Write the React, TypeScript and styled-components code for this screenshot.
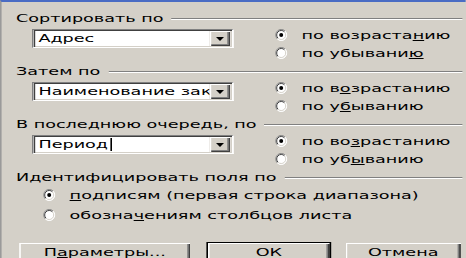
import React, { FC, ReactNode } from 'react';
import styled, { createGlobalStyle } from 'styled-components';

// The reference is the classic sort dialog, stretched horizontally.
// Everything is laid out at native width and scaled on X by STRETCH.
const STRETCH = 1.6;

const GlobalStyle = createGlobalStyle`
  html, body {
    margin: 0;
    padding: 0;
    background: #d4d0c8;
    overflow: hidden;
  }
`;

const Viewport = styled.div`
  width: 466px;
  height: 258px;
  overflow: hidden;
  background: #d4d0c8;
`;

const Dialog = styled.div`
  width: ${466 / STRETCH}px;
  height: 258px;
  box-sizing: border-box;
  transform: scaleX(${STRETCH});
  transform-origin: 0 0;
  display: flex;
  flex-direction: column;
  padding: 10px 2px 0 9px;
  border-top: 2px solid #4a6cc4;
  border-left: 1px solid #9a9a9a;
  font-family: 'DejaVu Sans', 'Liberation Sans', sans-serif;
  font-size: 11px;
  color: #000;
`;

const Group = styled.section`
  display: flex;
  flex-direction: column;
  margin-bottom: 3px;
`;

const Legend = styled.div`
  display: flex;
  align-items: center;
  gap: 5px;
  height: 13px;
  line-height: 13px;
  white-space: nowrap;

  &::after {
    content: '';
    flex: 1;
    border-top: 1px solid #808080;
    border-bottom: 1px solid #fff;
  }
`;

const SortRow = styled.div`
  display: flex;
  align-items: flex-start;
  padding: 1px 0 0 10px;
`;

const Combo = styled.div`
  flex: 0 0 auto;
  display: flex;
  align-items: stretch;
  width: 126px;
  height: 19px;
  margin-top: 3px;
  box-sizing: border-box;
  background: #fff;
  border-style: solid;
  border-width: 1px;
  border-color: #808080 #fff #fff #808080;
  box-shadow: inset 1px 1px 0 #404040, inset -1px -1px 0 #d4d0c8;
  padding: 1px;
`;

const ComboText = styled.div`
  flex: 1;
  display: flex;
  align-items: center;
  overflow: hidden;
  white-space: nowrap;
  padding-left: 2px;
`;

const Caret = styled.span`
  display: inline-block;
  width: 1px;
  height: 13px;
  margin-left: 1px;
  background: #000;
`;

const ComboButton = styled.div`
  flex: 0 0 13px;
  display: flex;
  align-items: center;
  justify-content: center;
  background: #d4d0c8;
  box-shadow: inset 1px 1px 0 #fff, inset -1px -1px 0 #404040, inset -2px -2px 0 #808080;
`;

const RadioColumn = styled.div<{ $indent: number; $row: number; $top?: number }>`
  display: flex;
  flex-direction: column;
  margin-left: ${(p) => p.$indent}px;
  padding-top: ${(p) => p.$top ?? 0}px;

  & > * {
    height: ${(p) => p.$row}px;
  }
`;

const RadioRow = styled.label`
  display: flex;
  align-items: center;
  gap: 9px;
  white-space: nowrap;
`;

const RadioMark = styled.svg`
  flex: 0 0 auto;
  width: ${12 / STRETCH}px;
  height: 12px;
`;

const Buttons = styled.div`
  display: flex;
  gap: 8px;
  margin: 14px 0 0 1px;
`;

const Button = styled.div<{ $width: number; $default?: boolean }>`
  flex: 0 0 auto;
  display: flex;
  align-items: center;
  justify-content: center;
  width: ${(p) => p.$width}px;
  height: 21px;
  box-sizing: border-box;
  background: #d4d0c8;
  border: 1px solid ${(p) => (p.$default ? '#000' : 'transparent')};
  box-shadow: inset 1px 1px 0 #fff, inset -1px -1px 0 #404040, inset -2px -2px 0 #808080;
  white-space: nowrap;
  line-height: 13px;

  &:first-child {
    margin-right: 1px;
  }
`;

const Arrow: FC = () => (
  <svg width={8 / STRETCH} height={4} viewBox="0 0 8 4" preserveAspectRatio="none">
    <polygon points="0,0 8,0 4,4" fill="#000" />
  </svg>
);

const Radio: FC<{ checked?: boolean; children: ReactNode }> = ({ checked, children }) => (
  <RadioRow>
    <RadioMark viewBox="0 0 12 12" preserveAspectRatio="none">
      <circle cx="6" cy="6" r="5.5" fill="#fff" />
      <path d="M2.1 9.9 A5.5 5.5 0 0 1 9.9 2.1" stroke="#808080" fill="none" />
      <path d="M9.9 2.1 A5.5 5.5 0 0 1 2.1 9.9" stroke="#fff" fill="none" />
      <path d="M2.8 9.2 A4.5 4.5 0 0 1 9.2 2.8" stroke="#404040" fill="none" />
      <path d="M9.2 2.8 A4.5 4.5 0 0 1 2.8 9.2" stroke="#d4d0c8" fill="none" />
      {checked && <circle cx="6" cy="6" r="2" fill="#000" />}
    </RadioMark>
    <span>{children}</span>
  </RadioRow>
);

type SortGroupProps = {
  title: string;
  value: ReactNode;
  asc: ReactNode;
  desc: ReactNode;
};

const SortGroup: FC<SortGroupProps> = ({ title, value, asc, desc }) => (
  <Group>
    <Legend>{title}</Legend>
    <SortRow>
      <Combo>
        <ComboText>{value}</ComboText>
        <ComboButton>
          <Arrow />
        </ComboButton>
      </Combo>
      <RadioColumn $indent={26} $row={18}>
        <Radio checked>{asc}</Radio>
        <Radio>{desc}</Radio>
      </RadioColumn>
    </SortRow>
  </Group>
);

export default function App() {
  return (
    <Viewport>
      <GlobalStyle />
      <Dialog>
        <SortGroup
          title="Сортировать по"
          value="Адрес"
          asc={<>по возраста<u>н</u>ию</>}
          desc={<>по убывани<u>ю</u></>}
        />
        <SortGroup
          title="Затем по"
          value="Наименование заказа"
          asc={<>по в<u>о</u>зрастанию</>}
          desc={<>по у<u>б</u>ыванию</>}
        />
        <SortGroup
          title="В последнюю очередь, по"
          value={<>Период<Caret /></>}
          asc={<>по во<u>з</u>растанию</>}
          desc={<>по уб<u>ы</u>ванию</>}
        />
        <Group>
          <Legend>Идентифицировать поля по</Legend>
          <RadioColumn $indent={17} $row={20} $top={1}>
            <Radio checked>
              <u>п</u>одписям (первая строка диапазона)
            </Radio>
            <Radio>
              обозна<u>ч</u>ениям столбцов листа
            </Radio>
          </RadioColumn>
        </Group>
        <Buttons>
          <Button $width={109}>
            П<u>а</u>раметры...
          </Button>
          <Button $width={78} $default>
            ОК
          </Button>
          <Button $width={74}>Отмена</Button>
        </Buttons>
      </Dialog>
    </Viewport>
  );
}
